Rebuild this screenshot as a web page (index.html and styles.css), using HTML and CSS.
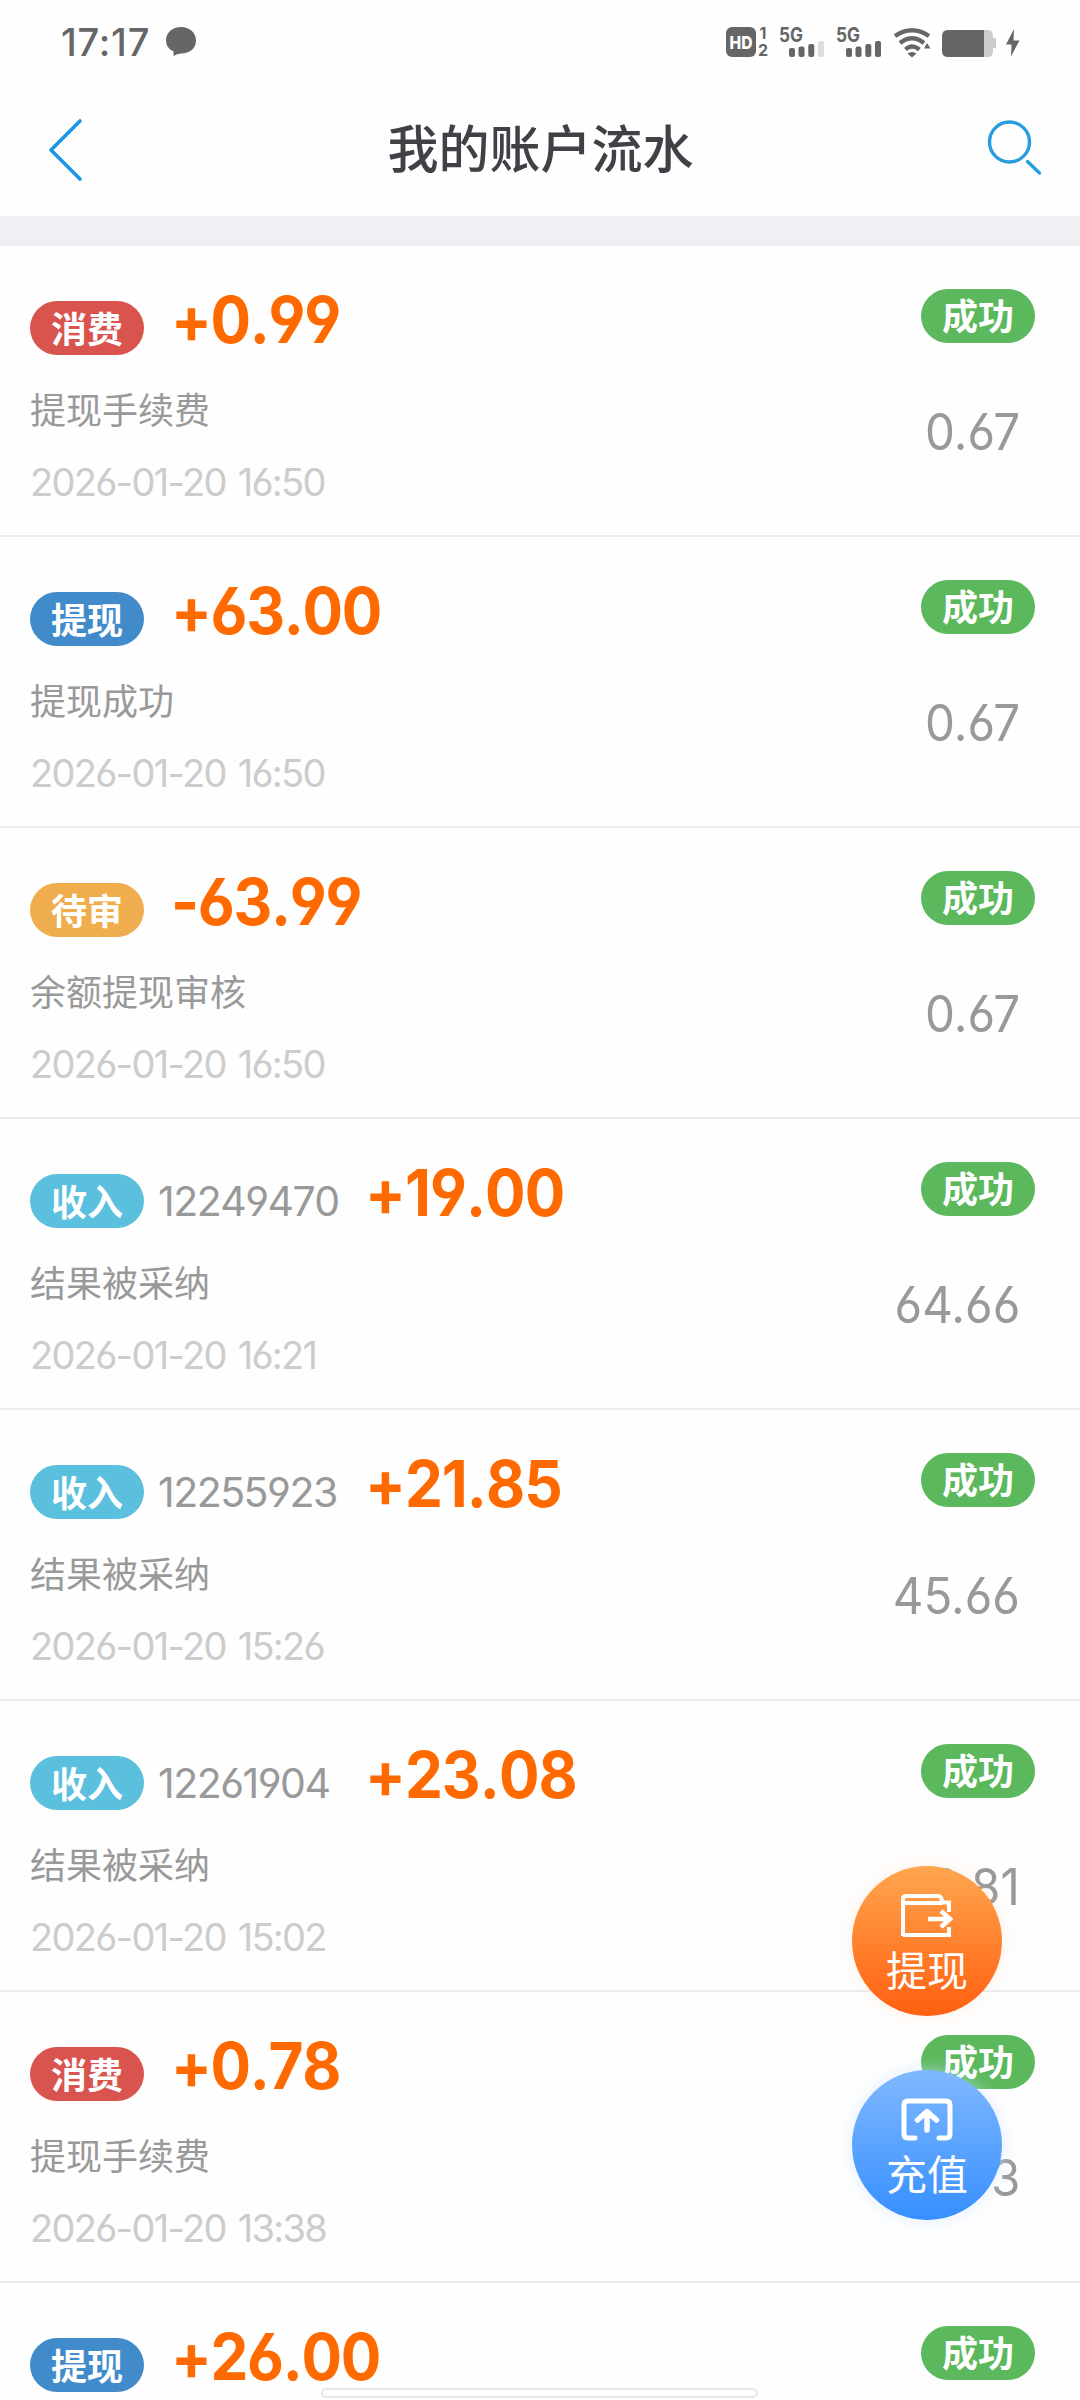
FILE: index.html
```html
<!DOCTYPE html>
<html lang="zh-CN">
<head>
<meta charset="utf-8">
<title>我的账户流水</title>
<link rel="stylesheet" href="styles.css">
</head>
<body>
<div class="statusbar">
  <span class="clock">17:17</span>
  <svg class="bubble" width="30" height="30" viewBox="0 0 30 30"><path d="M15 0C23.500 0 30 5.500 30 13.500S23.500 26.500 15 26.500Q11 26.700 7.500 29V24.200C3 22.500 0 18.500 0 13.500 0 5.500 6.500 0 15 0Z" fill="#666"/></svg>
  <svg class="indicators" width="296" height="54" viewBox="726 15 296 54" fill="#666">
    <rect x="726" y="27" width="30" height="30" rx="6"/>
    <text x="729.500" y="49" class="hd" textLength="23" lengthAdjust="spacingAndGlyphs">HD</text>
    <text x="759.500" y="38.500" class="sim">1</text>
    <text x="758" y="56" class="sim">2</text>
    <text x="779" y="41.500" class="net" textLength="24" lengthAdjust="spacingAndGlyphs">5G</text>
    <rect x="789" y="48" width="6" height="9" rx="2"/><rect x="798.500" y="46.500" width="6" height="10.500" rx="2"/><rect x="808.300" y="44" width="6" height="13" rx="2"/><rect x="818" y="41" width="6" height="16" rx="2" fill="#ddd"/>
    <text x="836" y="41.500" class="net" textLength="24" lengthAdjust="spacingAndGlyphs">5G</text>
    <rect x="846" y="48" width="6" height="9" rx="2"/><rect x="855.500" y="46.500" width="6" height="10.500" rx="2"/><rect x="865.300" y="44" width="6" height="13" rx="2"/><rect x="875" y="41" width="6" height="16" rx="2"/>
    <g fill="none" stroke="#666" stroke-width="4.200"><path d="M895 36Q912 24.500 929 36"/><path d="M900 43Q912 33.500 924 43"/><path d="M905.500 49.500Q912 43.500 919.500 49.500"/></g>
    <path d="M912 57.500L907.500 53.500Q912 50.500 916.500 53.500ZM927 43L930.500 48.500H924Z"/>
    <path d="M984 30H988Q993 30 993 36V38H996V48H993V51Q993 57 988 57H984Z" fill="#ccc"/>
    <path d="M948 30H984V57H948Q942 57 942 51V36Q942 30 948 30Z"/>
    <path d="M1014 29L1006 44.500H1011.500L1011 56.500L1019.500 40.500H1013.500Z"/>
  </svg>
</div>
<header class="navbar">
  <svg class="back" width="40" height="70" viewBox="0 0 40 70" fill="none" stroke="#1896e6" stroke-width="3.600" stroke-linecap="round" stroke-linejoin="round"><path d="M34 6L5 35L34 64"/></svg>
  <h1 class="title">我的账户流水</h1>
  <svg class="search" width="60" height="60" viewBox="0 0 60 60" fill="none" stroke="#2a9ddf" stroke-width="3.400" stroke-linecap="round"><circle cx="24.500" cy="22" r="20"/><path d="M42.500 41.500L54.500 53"/></svg>
</header>
<main class="list">
  <section class="row">
    <div class="info"><div class="line"><span class="badge spend">消费</span><span class="amount">+0.99</span></div><p class="desc">提现手续费</p><p class="date">2026-01-20 16:50</p></div>
    <div class="result"><span class="badge ok">成功</span><span class="balance">0.67</span></div>
  </section>
  <section class="row">
    <div class="info"><div class="line"><span class="badge cash">提现</span><span class="amount">+63.00</span></div><p class="desc">提现成功</p><p class="date">2026-01-20 16:50</p></div>
    <div class="result"><span class="badge ok">成功</span><span class="balance">0.67</span></div>
  </section>
  <section class="row">
    <div class="info"><div class="line"><span class="badge wait">待审</span><span class="amount">-63.99</span></div><p class="desc">余额提现审核</p><p class="date">2026-01-20 16:50</p></div>
    <div class="result"><span class="badge ok">成功</span><span class="balance">0.67</span></div>
  </section>
  <section class="row">
    <div class="info"><div class="line"><span class="badge income">收入</span><span class="order">12249470</span><span class="amount">+19.00</span></div><p class="desc">结果被采纳</p><p class="date">2026-01-20 16:21</p></div>
    <div class="result"><span class="badge ok">成功</span><span class="balance">64.66</span></div>
  </section>
  <section class="row">
    <div class="info"><div class="line"><span class="badge income">收入</span><span class="order">12255923</span><span class="amount">+21.85</span></div><p class="desc">结果被采纳</p><p class="date">2026-01-20 15:26</p></div>
    <div class="result"><span class="badge ok">成功</span><span class="balance">45.66</span></div>
  </section>
  <section class="row">
    <div class="info"><div class="line"><span class="badge income">收入</span><span class="order">12261904</span><span class="amount">+23.08</span></div><p class="desc">结果被采纳</p><p class="date">2026-01-20 15:02</p></div>
    <div class="result"><span class="badge ok">成功</span><span class="balance">23.81</span></div>
  </section>
  <section class="row">
    <div class="info"><div class="line"><span class="badge spend">消费</span><span class="amount">+0.78</span></div><p class="desc">提现手续费</p><p class="date">2026-01-20 13:38</p></div>
    <div class="result"><span class="badge ok">成功</span><span class="balance">0.73</span></div>
  </section>
  <section class="row last">
    <div class="info"><div class="line"><span class="badge cash">提现</span><span class="amount">+26.00</span></div></div>
    <div class="result"><span class="badge ok">成功</span></div>
  </section>
</main>
<nav class="floating">
  <a class="fab withdraw">
    <svg width="54" height="46" viewBox="0 0 54 46" fill="none" stroke="#fff" stroke-width="4"><path d="M3 44V7Q3 4 7 4H38Q42 4 42 10.500H49V20M49 35V43H3M3 11H42"/><path d="M28 27H47M41 19L50 27L41 35" stroke-width="4.500"/></svg>
    <span>提现</span>
  </a>
  <a class="fab recharge">
    <svg width="54" height="46" viewBox="0 0 54 46" fill="none" stroke="#fff" stroke-width="5" stroke-linecap="round" stroke-linejoin="round"><path d="M15 42H8Q4 42 4 38V9Q4 5 8 5H46Q50 5 50 9V38Q50 42 46 42H39"/><path d="M27 34V16M17.500 24L27 15.500L36.500 24" stroke-width="5.500"/></svg>
    <span>充值</span>
  </a>
</nav>
<div class="homebar"></div>
</body>
</html>
```
FILE: styles.css
```css
* { box-sizing: border-box; margin: 0; padding: 0; }
body {
  position: relative;
  width: 1080px;
  height: 2400px;
  overflow: hidden;
  background: #fefefe;
  font-family: Inter, "Noto Sans CJK SC", sans-serif;
  font-feature-settings: "cv03", "cv04";
}
.statusbar {
  display: flex;
  height: 84px;
  padding: 25px 58px 0 61px;
  color: #666;
}
.clock { width: 105px; font-size: 38px; line-height: 34px; font-weight: 500; letter-spacing: 0.8px; white-space: nowrap; }
.bubble { margin-top: 2px; }
.indicators { margin: -10px 0 0 auto; }
.hd { font: 800 18px Inter, sans-serif; fill: #fff; }
.sim { font: 700 16px Inter, sans-serif; }
.net { font: 700 20px Inter, sans-serif; }
.navbar {
  display: flex;
  justify-content: space-between;
  align-items: center;
  height: 132px;
  padding: 0 35px 0 46px;
}
.back { margin-right: 10px; }
.back, .search { flex: none; }
.title { font-size: 51px; line-height: 70px; font-weight: 500; color: #404147; }
.list { border-top: 30px solid #efeff4; }
.row {
  display: flex;
  justify-content: space-between;
  height: 291px;
  padding: 43px 45px 0 30px;
  border-bottom: 2px solid #ececec;
}
.last { height: 118px; border-bottom: 0; }
.line { display: flex; align-items: baseline; height: 86px; line-height: 61px; }
.last .line { height: 75px; }
.badge {
  flex: none;
  width: 114px;
  height: 54px;
  border-radius: 27px;
  text-align: center;
  font: 700 36px/50px "Noto Sans CJK SC", sans-serif;
  color: #fff;
}
.line .badge { line-height: 52px; }
.spend { background: #d9534f; }
.cash { background: #428bca; }
.wait { background: #f0ad4e; }
.income { background: #5bc0de; }
.ok { background: #5cb85c; }
.order { width: 180px; margin-left: 14px; font-size: 41px; font-kerning: none; color: #999; letter-spacing: -1.5px; }
.amount {
  margin-left: 27px;
  font-size: 64px;
  font-weight: 700;
  font-kerning: none;
  color: #ff6a00;
  letter-spacing: -1.4px;
  transform: scaleX(.94);
  transform-origin: left;
}
.order + .amount { letter-spacing: -1px; }
.desc { font-size: 36px; line-height: 72px; color: #999; }
.date { font-size: 38px; line-height: 71px; color: #ccc; letter-spacing: -1.7px; word-spacing: 3px; }
.result { display: flex; flex-direction: column; align-items: flex-end; }
.balance {
  margin: 64px 15px 0 0;
  font-size: 50px;
  line-height: 50px;
  color: #999;
  transform: scaleX(.95);
  transform-origin: right;
}
.floating {
  position: absolute;
  left: 852px;
  top: 1866px;
  display: flex;
  flex-direction: column;
  gap: 54px;
}
.fab {
  display: flex;
  flex-direction: column;
  align-items: center;
  width: 150px;
  height: 150px;
  padding-top: 26px;
  border-radius: 50%;
  color: #fff;
  font-size: 41px;
  line-height: 67px;
}
.fab svg { flex: none; }
.withdraw { background: linear-gradient(#ffa64f, #ff5f10); box-shadow: 0 0 18px rgba(255, 200, 160, .25); }
.recharge { background: linear-gradient(#80b8ff, #368fff); box-shadow: 0 0 18px rgba(205, 228, 255, .6); }
.homebar {
  position: absolute;
  left: 321px;
  top: 2388px;
  width: 437px;
  height: 10px;
  border: 2px solid #e6e6e6;
  border-radius: 5px;
  background: #fff;
}
```
